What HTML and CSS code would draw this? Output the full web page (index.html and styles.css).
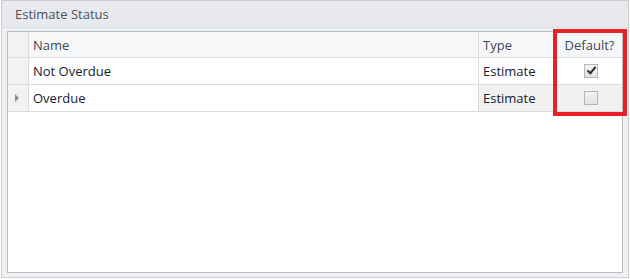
FILE: index.html
```html
<!DOCTYPE html>
<html lang="en">

<head>
  <meta charset="UTF-8">
  <title>Estimate Status</title>
  <link rel="stylesheet" href="styles.css">
</head>

<body>
  <div class="panel">
    <div class="panel-title">Estimate Status</div>
    <div class="grid">
      <!-- Header row -->
      <div class="cell indicator head"></div>
      <div class="cell head">Name</div>
      <div class="cell head">Type</div>
      <div class="cell head center">Default?</div>

      <!-- Data rows -->
      <div class="cell indicator"></div>
      <div class="cell">Not Overdue</div>
      <div class="cell">Estimate</div>
      <div class="cell center"><span class="check checked"></span></div>

      <div class="cell indicator"><span class="arrow"></span></div>
      <div class="cell">Overdue</div>
      <div class="cell selected">Estimate</div>
      <div class="cell center selected"><span class="check"></span></div>

      <div class="empty"></div>
    </div>
    <div class="highlight"></div>
  </div>
</body>

</html>
```

FILE: styles.css
```css
/* General body styling */
body {
  font-family: "Open Sans", "Noto Sans", sans-serif;
  font-size: 13px;
  margin: 0;
  padding: 0;
  background: white;
}

/* Group panel */
.panel {
  position: relative;
  margin-left: 1px;
  width: 628px;
  height: 278px;
  box-sizing: border-box;
  border: 1px solid #c9ccd1;
  background-color: #eef0f2;
  display: flex;
  flex-direction: column;
}

.panel-title {
  height: 26px;
  line-height: 26px;
  padding-left: 13px;
  color: #4a5260;
  background-color: #e7e9ec;
  border-bottom: 1px solid #dcdfe3;
}

/* Grid */
.grid {
  flex: 1;
  margin: 3px 5px 4px 5px;
  border: 1px solid #b9bdc4;
  background: white;
  display: grid;
  grid-template-columns: 21px 450px 78px 1fr;
  grid-template-rows: 26px 27px 27px 1fr;
  color: #17202f;
}

.cell {
  border-right: 1px solid #dadcdf;
  border-bottom: 1px solid #dadcdf;
  display: flex;
  align-items: center;
  padding-left: 4px;
  white-space: nowrap;
}

.cell:nth-child(4n) {
  border-right: none;
}

.head {
  background-color: #f6f7f8;
  color: #3e4858;
}

.indicator {
  background-color: #f1f2f4;
  padding-left: 0;
  justify-content: center;
}

.center {
  justify-content: center;
  padding-left: 0;
}

.selected {
  background-color: #f1f1f2;
}

.empty {
  grid-column: 1 / -1;
}

/* Focused row arrow */
.arrow {
  width: 0;
  height: 0;
  border-top: 4px solid transparent;
  border-bottom: 4px solid transparent;
  border-left: 4px solid #8a8d93;
  margin-left: -2px;
}

/* Checkbox */
.check {
  width: 12px;
  height: 12px;
  border: 1px solid #b3b6ba;
  background: linear-gradient(#f3f3f3, #e2e2e2);
  position: relative;
  margin-left: 2px;
}

.check.checked::after {
  content: "";
  position: absolute;
  left: 4px;
  top: 0px;
  width: 3px;
  height: 7px;
  border-right: 2px solid #2b2f36;
  border-bottom: 2px solid #2b2f36;
  transform: rotate(40deg);
}

/* Red highlight round the Default? column */
.highlight {
  position: absolute;
  left: 551px;
  top: 28px;
  width: 66px;
  height: 79px;
  border: 4px solid #e8202a;
}
```
